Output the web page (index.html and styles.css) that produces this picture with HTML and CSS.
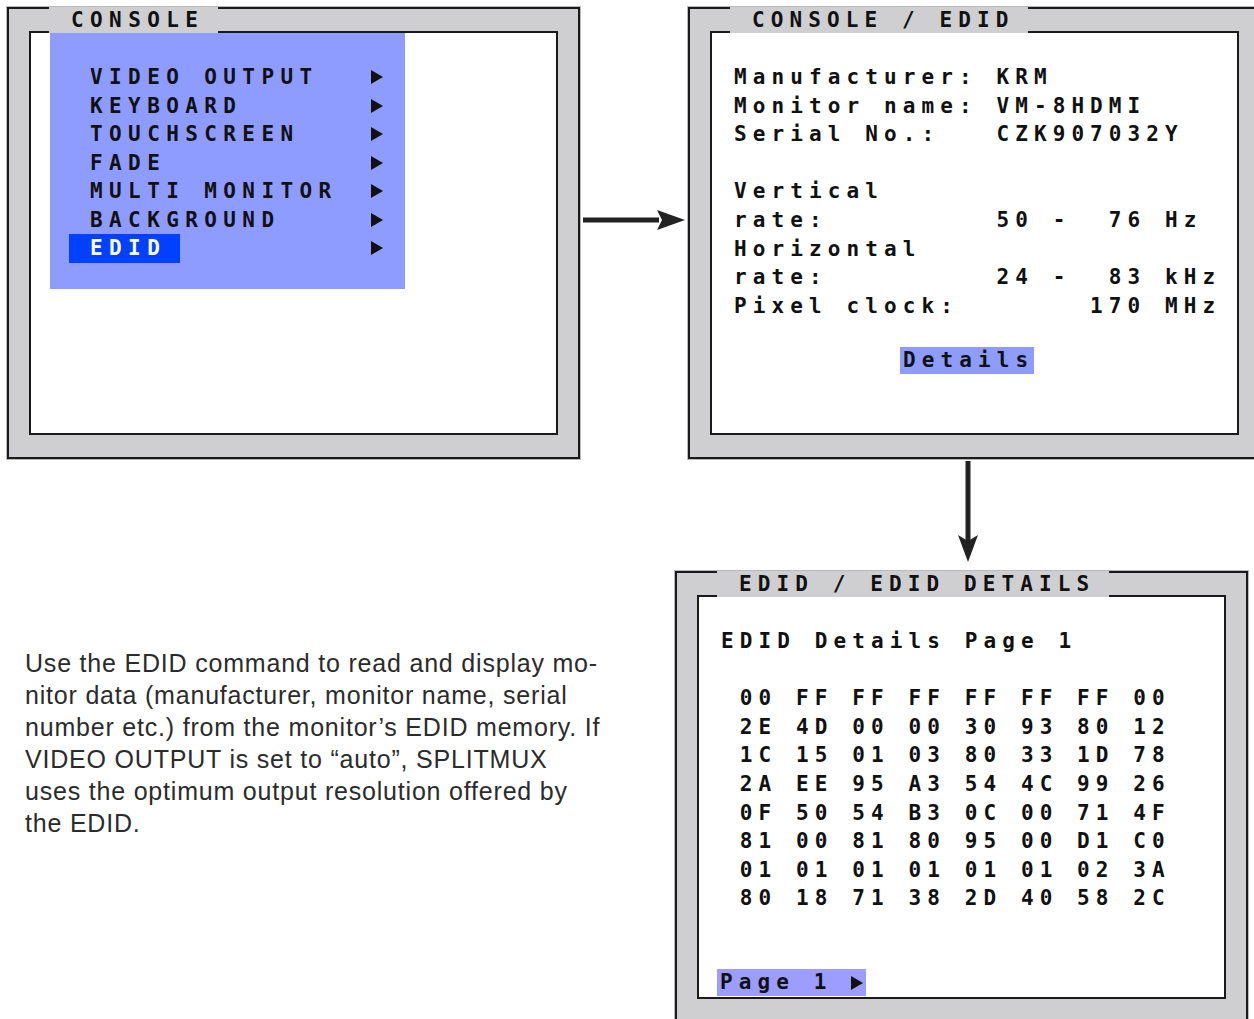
FILE: index.html
```html
<!DOCTYPE html>
<html lang="en">
<head>
    <meta charset="UTF-8" />
    <title>SPLITMUX - EDID</title>
    <link rel="stylesheet" href="styles.css">
</head>
<body>
    <div class="row top-row">
        <!-- CONSOLE main menu -->
        <section class="panel">
            <div class="screen">
                <ul class="menu">
                    <li><span class="label">VIDEO OUTPUT</span><span class="tri"></span></li>
                    <li><span class="label">KEYBOARD</span><span class="tri"></span></li>
                    <li><span class="label">TOUCHSCREEN</span><span class="tri"></span></li>
                    <li><span class="label">FADE</span><span class="tri"></span></li>
                    <li><span class="label">MULTI MONITOR</span><span class="tri"></span></li>
                    <li><span class="label">BACKGROUND</span><span class="tri"></span></li>
                    <li class="active"><span class="label">EDID</span><span class="tri"></span></li>
                </ul>
            </div>
            <h2 class="panel-title wide-pitch">CONSOLE</h2>
        </section>

        <div class="arrow-right">
            <svg width="108" height="26" viewBox="0 0 108 26">
                <rect x="3" y="10.5" width="76" height="5" fill="#222" />
                <polygon points="77,3 105,13 77,23 82,13" fill="#222" />
            </svg>
        </div>

        <!-- CONSOLE / EDID -->
        <section class="panel">
            <div class="screen">
<pre class="screen-text">Manufacturer: KRM
Monitor name: VM-8HDMI
Serial No.:   CZK907032Y

Vertical
rate:         50 -  76 Hz
Horizontal
rate:         24 -  83 kHz
Pixel clock:       170 MHz</pre>
                <div class="btn btn-details">Details</div>
            </div>
            <h2 class="panel-title">CONSOLE / EDID</h2>
        </section>
    </div>

    <div class="arrow-down">
        <svg width="24" height="112" viewBox="0 0 24 112">
            <rect x="9.5" y="2" width="5" height="80" fill="#222" />
            <polygon points="2,76 12,103 22,76 12,82" fill="#222" />
        </svg>
    </div>

    <div class="row bottom-row">
        <p class="note">Use the EDID command to read and display mo-<br>nitor data (manufacturer, monitor name, serial<br>number etc.) from the monitor’s EDID memory. If<br>VIDEO OUTPUT is set to “auto”, SPLITMUX<br>uses the optimum output resolution offered by<br>the EDID.</p>

        <!-- EDID / EDID DETAILS -->
        <section class="panel">
            <div class="screen">
<pre class="screen-text">EDID Details Page 1

 00 FF FF FF FF FF FF 00
 2E 4D 00 00 30 93 80 12
 1C 15 01 03 80 33 1D 78
 2A EE 95 A3 54 4C 99 26
 0F 50 54 B3 0C 00 71 4F
 81 00 81 80 95 00 D1 C0
 01 01 01 01 01 01 02 3A
 80 18 71 38 2D 40 58 2C</pre>
                <div class="btn btn-page">Page 1 <span class="tri"></span></div>
            </div>
            <h2 class="panel-title">EDID / EDID DETAILS</h2>
        </section>
    </div>
</body>
</html>
```

FILE: styles.css
```css
html, body { overflow: hidden; }
body { margin: 0; padding: 7px 0 0 7px; width: 1300px; background: #fff; color: #111; font-family: "DejaVu Sans Mono", monospace; }
.row { display: flex; align-items: flex-start; }

/* monitor frames */
.panel { position: relative; box-sizing: border-box; flex: none; width: 573px; height: 452px; padding: 22px 20px; background: #cfcfd1; border: 2px solid #1a1a1a; box-shadow: 0 0 0 1px #b9b9bb; }
.screen { box-sizing: border-box; height: 100%; background: #fff; border: 2px solid #1a1a1a; }
.panel-title { position: absolute; left: 40px; top: -2px; height: 26px; margin: 0; padding: 0 14px 0 22px; background: #cfcfd1; font-size: 21px; font-weight: bold; line-height: 26px; letter-spacing: 6.1px; color: #111; }
.panel-title.wide-pitch { letter-spacing: 6.4px; }

/* main menu */
.menu { list-style: none; box-sizing: border-box; width: 355px; height: 256px; margin: 0 0 0 19px; padding: 30px 0 0 19px; background: #8e9cff; font-size: 21px; font-weight: bold; letter-spacing: 6.4px; line-height: 28.5px; }
.menu li { display: grid; grid-template-columns: 302px 12px; align-items: center; }
.menu .label { justify-self: start; padding: 0 14px 0 21px; }
.menu .active .label { background: #0040ff; color: #fff; }
.tri { display: inline-block; width: 0; height: 0; border-left: 12px solid #111; border-top: 7px solid transparent; border-bottom: 7px solid transparent; }

/* screen text */
.screen-text { margin: 0; padding: 30px 0 0 22px; font-family: "DejaVu Sans Mono", monospace; font-size: 21px; font-weight: bold; letter-spacing: 6.1px; line-height: 28.6px; color: #111; }
.btn { display: inline-block; height: 27px; padding: 0 0 0 3px; background: #8e9cff; font-size: 21px; font-weight: bold; letter-spacing: 6.1px; line-height: 27px; white-space: pre; }
.btn-details { margin: 27px 0 0 188px; }
.btn-page { margin: 56px 0 0 18px; padding-right: 3px; background: #9c9dff; }
.btn-page .tri { vertical-align: -1px; }

.arrow-right { flex: none; width: 108px; }
.arrow-right svg { display: block; margin-top: 200px; }
.arrow-down { height: 112px; }
.arrow-down svg { display: block; margin-left: 949px; }

.note { box-sizing: border-box; flex: none; width: 668px; margin: 0; padding: 76px 0 0 18px; font-family: "Liberation Sans", Arial, sans-serif; font-size: 25px; letter-spacing: 0.8px; line-height: 32px; color: #2b2b2b; }
```
